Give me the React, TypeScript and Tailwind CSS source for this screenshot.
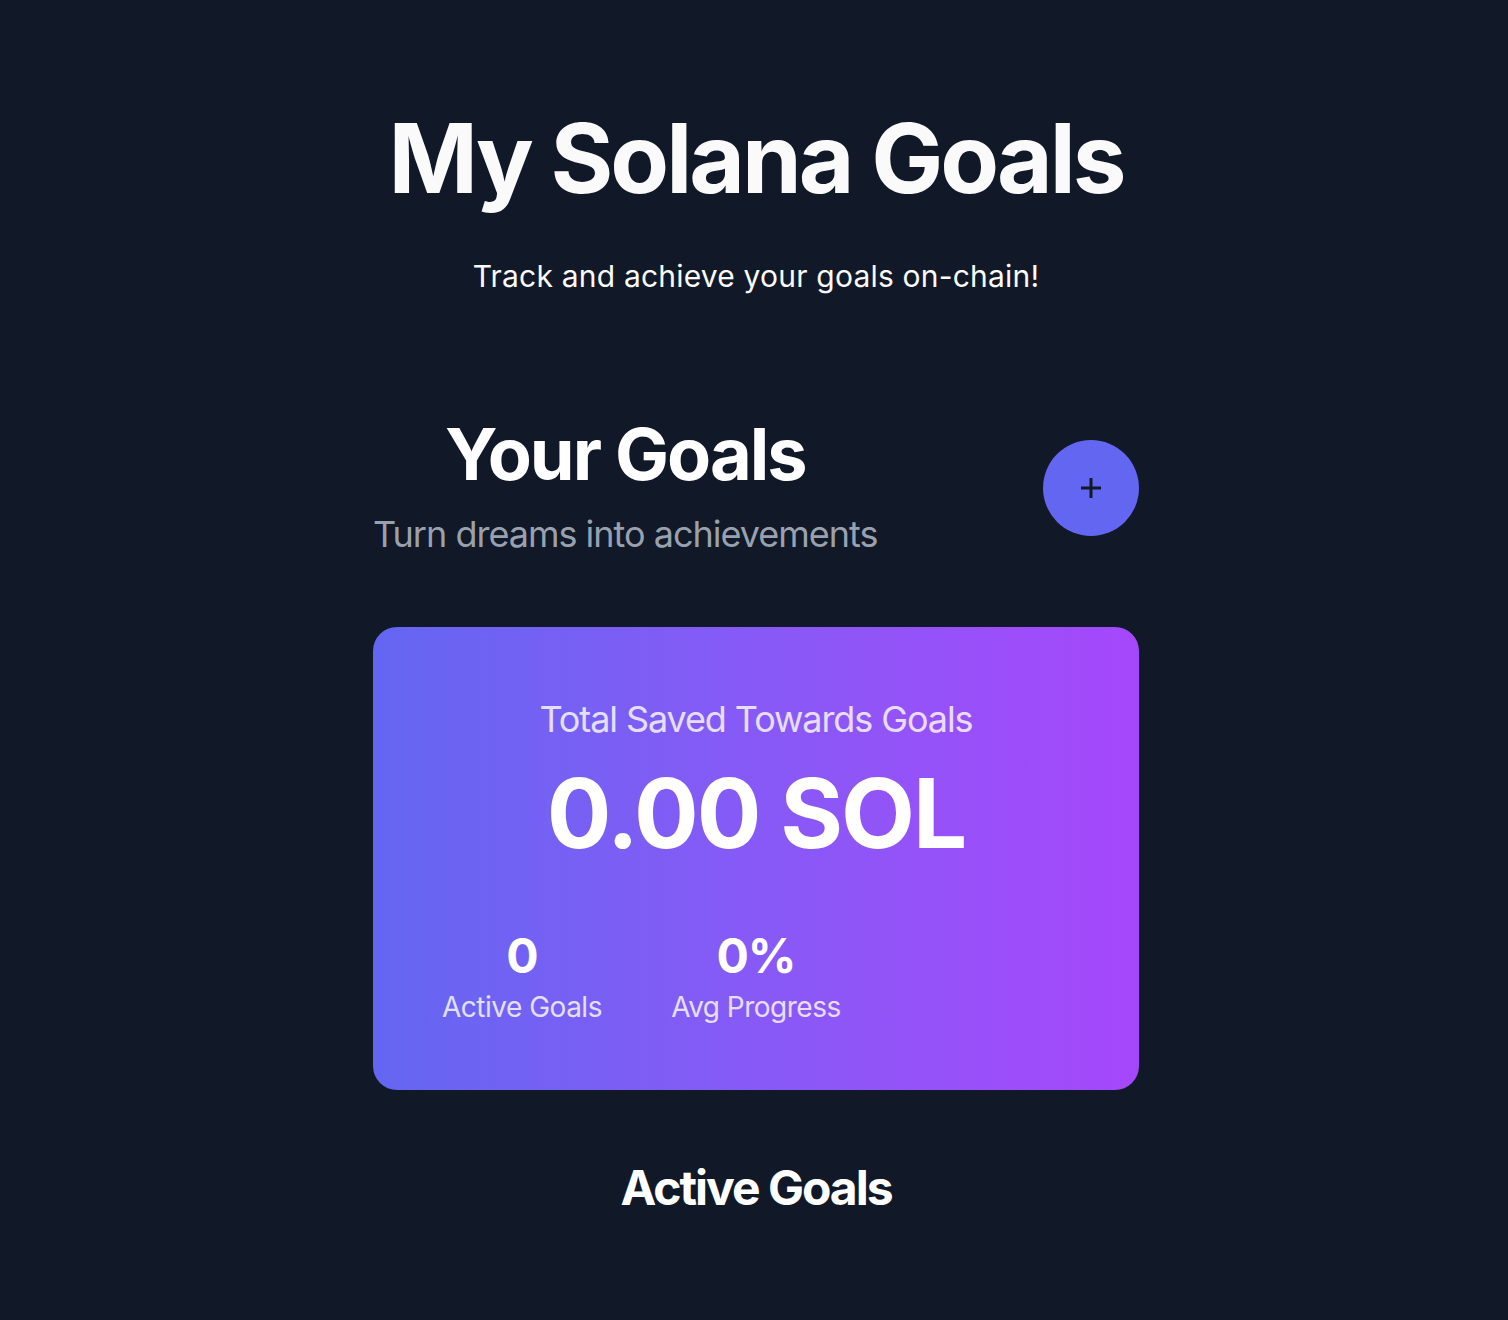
const STATS = [
  { value: '0', label: 'Active Goals' },
  { value: '0%', label: 'Avg Progress' },
]

export default function App() {
  return (
    <div className="min-h-screen bg-[#111827] pl-[4px] font-['Inter',sans-serif] text-white">
      {/* Hero */}
      <header className="flex flex-col items-center pt-[110px]">
        <h1 className="text-8xl font-bold leading-none tracking-[-3px] text-[#fafafa]">My Solana Goals</h1>
        <p className="mt-[52px] text-3xl tracking-[0.2px] text-[#fafafa]">Track and achieve your goals on-chain!</p>
      </header>

      <main className="mx-auto mt-[124px] w-[766px]">
        {/* Section header */}
        <div className="flex items-center justify-between">
          <div className="text-center">
            <h2 className="text-7xl font-bold leading-none tracking-[-2px]">Your Goals</h2>
            <p className="mt-6 text-4xl tracking-[-1px] text-gray-400">Turn dreams into achievements</p>
          </div>
          <button
            className="mt-[4px] flex h-24 w-24 items-center justify-center rounded-full bg-[#6366f1]"
            aria-label="Add goal"
          >
            <svg width="22" height="22" viewBox="0 0 22 22" fill="none" stroke="#111827" strokeWidth="3">
              <line x1="11" y1="1" x2="11" y2="21" />
              <line x1="1" y1="11" x2="21" y2="11" />
            </svg>
          </button>
        </div>

        {/* Summary card */}
        <section className="mt-[73px] rounded-3xl bg-linear-to-r from-[#6366f1] to-[#a547fb] px-12 pb-[63px] pt-[72px] text-center">
          <p className="text-4xl tracking-[-1.1px] text-white/80">Total Saved Towards Goals</p>
          <p className="mt-[26px] text-8xl font-bold leading-none tracking-[-2px]">0.00 SOL</p>
          <div className="mt-[71px] grid grid-cols-3 gap-8">
            {STATS.map(({ value, label }) => (
              <div key={label}>
                <div className="text-5xl font-bold leading-none tracking-[-1px]">{value}</div>
                <div className="mt-2 text-[28px] leading-[39px] tracking-[-0.5px] text-white/80">{label}</div>
              </div>
            ))}
            <div />
          </div>
        </section>

        <h3 className="mt-[74px] text-center text-5xl font-bold leading-none tracking-[-2px]">Active Goals</h3>
      </main>
    </div>
  )
}
